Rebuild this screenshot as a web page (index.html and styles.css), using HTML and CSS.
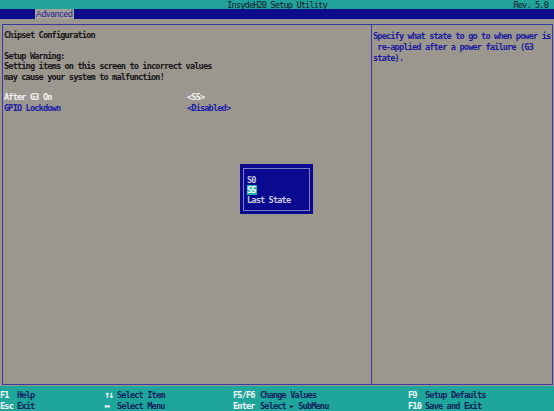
FILE: index.html
```html
<!DOCTYPE html>
<html>
<head>
  <title>InsydeH20 Setup Utility</title>
  <link rel="stylesheet" href="styles.css">
</head>
<body>
  <div class="screen">
    <div class="title-bar">
      <span></span>
      <span class="title">InsydeH20 Setup Utility</span>
      <span class="rev">Rev. 5.0</span>
    </div>

    <div class="menu-bar">
      <span class="tab active">Advanced</span>
    </div>

    <div class="frame">
      <div class="main-pane">
        <div class="line dark">Chipset Configuration</div>
        <div class="line"></div>
        <div class="line dark">Setup Warning:</div>
        <div class="line dark">Setting items on this screen to incorrect values</div>
        <div class="line dark">may cause your system to malfunction!</div>
        <div class="line"></div>
        <div class="line item selected">
          <span class="item-name">After G3 On</span>
          <span class="item-value">&lt;S5&gt;</span>
        </div>
        <div class="line item">
          <span class="item-name">GPIO Lockdown</span>
          <span class="item-value">&lt;Disabled&gt;</span>
        </div>
      </div>
      <div class="help-pane">Specify what state to go to when power is
 re-applied after a power failure (G3
state).</div>
    </div>

    <!-- option popup for After G3 On -->
    <div class="popup">
      <div class="popup-inner">
        <div class="line">S0</div>
        <div class="line"><span class="pick">S5</span></div>
        <div class="line">Last State</div>
      </div>
    </div>

    <div class="footer">
      <div class="keys">
        <span class="key">F1</span><span class="desc">Help</span>
        <span class="key arrow">&#8593;&#8595;</span><span class="desc">Select Item</span>
        <span class="key">F5/F6</span><span class="desc">Change Values</span>
        <span class="key">F9</span><span class="desc">Setup Defaults</span>

        <span class="key">Esc</span><span class="desc">Exit</span>
        <span class="key arrow">&#8596;</span><span class="desc">Select Menu</span>
        <span class="key">Enter</span><span class="desc">Select <span class="tri">&#9654;</span> SubMenu</span>
        <span class="key">F10</span><span class="desc">Save and Exit</span>
      </div>
    </div>
  </div>
</body>
</html>
```

FILE: styles.css
```css
body {
  margin: 0;
  background-color: #9b978f;
  font-family: "DejaVu Sans Mono", "Liberation Mono", monospace;
  font-size: 8.6px;
  letter-spacing: -0.85px;
  font-weight: bold;
}

.screen {
  position: relative;
  width: 554px;
  height: 411px;
  overflow: hidden;
  display: flex;
  flex-direction: column;
  background-color: #9b978f;
}

/* top strip */
.title-bar {
  height: 9px;
  line-height: 10px;
  background-color: #21a29a;
  color: #10202a;
  font-weight: normal;
  display: grid;
  grid-template-columns: 1fr auto 1fr;
}

.title-bar .rev {
  justify-self: end;
  padding-right: 6px;
}

.menu-bar {
  height: 10px;
  line-height: 10px;
  background-color: #0c0c8c;
  padding-left: 35px;
}

.tab {
  display: inline-block;
  height: 10px;
  padding: 0 1px;
  color: #1c1c9c;
  font-family: "Liberation Sans", Arial, sans-serif;
  font-weight: normal;
  letter-spacing: -0.2px;
}

.tab.active {
  background-color: #a4a098;
}

/* main frame */
.frame {
  margin: 5px 1px 0 2px;
  height: 360px;
  border: 1px solid #3838a0;
  display: grid;
  grid-template-columns: 368px 1fr;
}

.main-pane {
  padding: 5px 0 0 1px;
}

.line {
  height: 10.4px;
  line-height: 10.4px;
  white-space: pre;
}

.dark {
  color: #161616;
}

.item {
  display: flex;
}

.item-name {
  width: 183px;
  color: #1c1ca8;
}

.item-value {
  color: #1c1ca8;
}

.item.selected .item-name,
.item.selected .item-value {
  color: #f2f2f2;
}

.help-pane {
  border-left: 1px solid #3838a0;
  padding: 6px 0 0 1px;
  line-height: 10.8px;
  white-space: pre;
  color: #1a1aa0;
}

/* option popup */
.popup {
  position: absolute;
  left: 240px;
  top: 164px;
  width: 73px;
  height: 50px;
  box-sizing: border-box;
  padding: 4px 3px 3px 3px;
  background-color: #0a0a90;
}

.popup-inner {
  height: 100%;
  box-sizing: border-box;
  border: 1px solid #7c7cc0;
  padding: 6px 0 0 3px;
  color: #c8c8dc;
}

.popup .line {
  height: 10px;
  line-height: 10px;
}

.pick {
  background-color: #20b4aa;
  color: #ffffff;
  padding: 0 1px 0 0;
}

/* key legend */
.footer {
  margin-top: 1px;
  flex: 1;
  background-color: #1ea59c;
  padding: 4px 0 0 0;
}

.keys {
  display: grid;
  grid-template-columns: 17px 87px 13px 116px 27px 148px 17px 1fr;
  grid-auto-rows: 10.3px;
  line-height: 10.3px;
}

.key {
  color: #f4f4f4;
}

.arrow {
  font-size: 10px;
  letter-spacing: -2px;
}

.tri {
  font-size: 6px;
  letter-spacing: 0;
  vertical-align: 1px;
}

.desc {
  color: #14245c;
}
```
